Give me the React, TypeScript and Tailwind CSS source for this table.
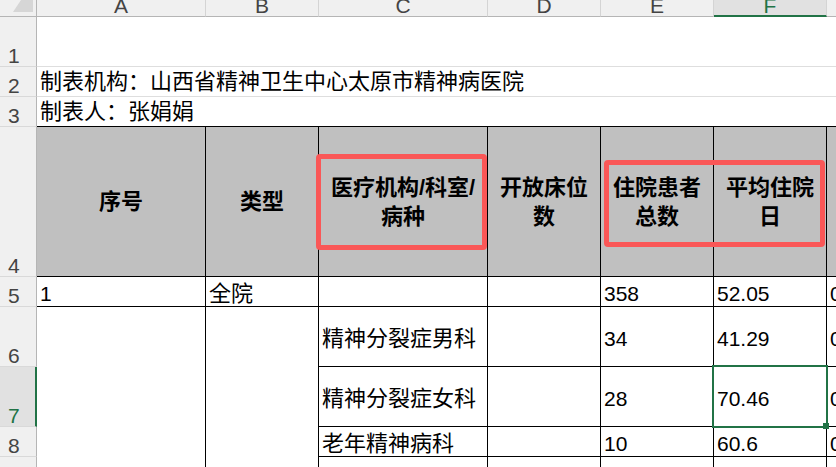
const cols = ["A", "B", "C", "D", "E", "F", "G"];

const font = { fontFamily: '"Liberation Sans", "Noto Sans CJK SC", sans-serif' };

const rowHead = "flex items-end pl-[8px] bg-[#f0f0f0] border-r border-r-[#b5b5b5] border-b border-b-[#d9d9d9] text-[21px] leading-[21px] text-[#444]";
const cell = "flex items-center pt-[4px] pl-[3px] border-r border-b border-black overflow-hidden whitespace-nowrap";
const num = `${cell} text-[21px] leading-[21px]`;
const cjk = `${cell} text-[22px] leading-[21px]`;
const head = "flex items-center justify-center text-center bg-[#c0c0c0] border-r border-b border-black text-[22px] leading-[29px] font-bold text-black";

const rows = [
  { n: 6, c: "精神分裂症男科", e: "34", f: "41.29" },
  { n: 7, c: "精神分裂症女科", e: "28", f: "70.46", selected: true },
  { n: 8, c: "老年精神病科", e: "10", f: "60.6" },
  { n: 9, c: "", e: "", f: "" },
];

export default function App() {
  return (
    <div className="w-[836px] h-[467px] overflow-hidden bg-white" style={font}>
      <div className="relative grid grid-cols-[37px_169px_113px_169px_113px_113px_113px_113px] grid-rows-[17px_50px_30px_30px_150px_30px_60px_60px_30px_30px] text-black">
        {/* column letters */}
        <div className="flex justify-end items-end pr-[3px] pb-[4px] bg-[#f0f0f0] border-r border-b border-[#b5b5b5]">
          <svg width="20" height="12" viewBox="0 0 20 12">
            <polygon points="8,0 20,0 20,12 0,12" fill="#d6d6d6" />
          </svg>
        </div>
        {cols.map((c) =>
          c === "F" ? (
            <div key={c} className="flex justify-center items-start overflow-hidden bg-[#e1e1e1] border-r border-r-[#d4d4d4] border-b-2 border-b-[#217346] text-[21px] leading-[11px] text-[#217346]">
              {c}
            </div>
          ) : (
            <div key={c} className="flex justify-center items-start overflow-hidden bg-[#f0f0f0] border-r border-r-[#d4d4d4] border-b border-b-[#b5b5b5] text-[21px] leading-[11px] text-[#444]">
              {c}
            </div>
          )
        )}

        {/* rows 1-3 */}
        <div className={rowHead}>1</div>
        <div className="col-span-7 border-b border-[#dedede]"></div>
        <div className={rowHead}>2</div>
        <div className="col-span-7 flex items-center pl-[3px] border-b border-[#dedede] text-[22px] leading-[21px] whitespace-nowrap">
          制表机构：山西省精神卫生中心太原市精神病医院
        </div>
        <div className={rowHead}>3</div>
        <div className="col-span-7 flex items-center pl-[3px] border-b border-black text-[22px] leading-[21px] whitespace-nowrap">
          制表人：张娟娟
        </div>

        {/* table header */}
        <div className={rowHead}>4</div>
        <div className={head}>序号</div>
        <div className={head}>类型</div>
        <div className={head}>医疗机构/科室/<br />病种</div>
        <div className={head}>开放床位<br />数</div>
        <div className={head}>住院患者<br />总数</div>
        <div className={head}>平均住院<br />日</div>
        <div className={head}></div>

        {/* row 5 */}
        <div className={rowHead}>5</div>
        <div className={num}>1</div>
        <div className={cjk}>全院</div>
        <div className={cjk}></div>
        <div className={num}></div>
        <div className={num}>358</div>
        <div className={num}>52.05</div>
        <div className={num}>0</div>

        {rows.map((r) => (
          <>
            {r.selected ? (
              <div key={`h${r.n}`} className="flex items-end pl-[8px] bg-[#e1e1e1] border-r-2 border-r-[#217346] border-b border-b-[#d9d9d9] text-[21px] leading-[21px] text-[#217346]">
                {r.n}
              </div>
            ) : (
              <div key={`h${r.n}`} className={rowHead}>{r.n}</div>
            )}
            {r.n === 6 && (
              <>
                <div className="row-span-4 border-r border-black"></div>
                <div className="row-span-4 border-r border-black"></div>
              </>
            )}
            <div className={cjk}>{r.c}</div>
            <div className={num}></div>
            <div className={num}>{r.e}</div>
            <div className={`${num} ${r.selected ? "relative overflow-visible" : ""}`}>
              {r.f}
              {r.selected && (
                <>
                  <div className="absolute -left-[2px] -top-[2px] w-[116px] h-[63px] border-2 border-[#217346]"></div>
                  <div className="absolute left-[109px] top-[56px] w-[6px] h-[6px] bg-[#217346] z-10"></div>
                </>
              )}
            </div>
            <div className={num}>{r.n === 9 ? "" : "0"}</div>
          </>
        ))}

        {/* annotation boxes */}
        <div className="absolute left-[316px] top-[154px] w-[171px] h-[96px] border-[5px] border-[#fa5757] rounded-[4px]"></div>
        <div className="absolute left-[604px] top-[160px] w-[221px] h-[87px] border-[5px] border-[#fa5757] rounded-[4px]"></div>
      </div>
    </div>
  );
}
